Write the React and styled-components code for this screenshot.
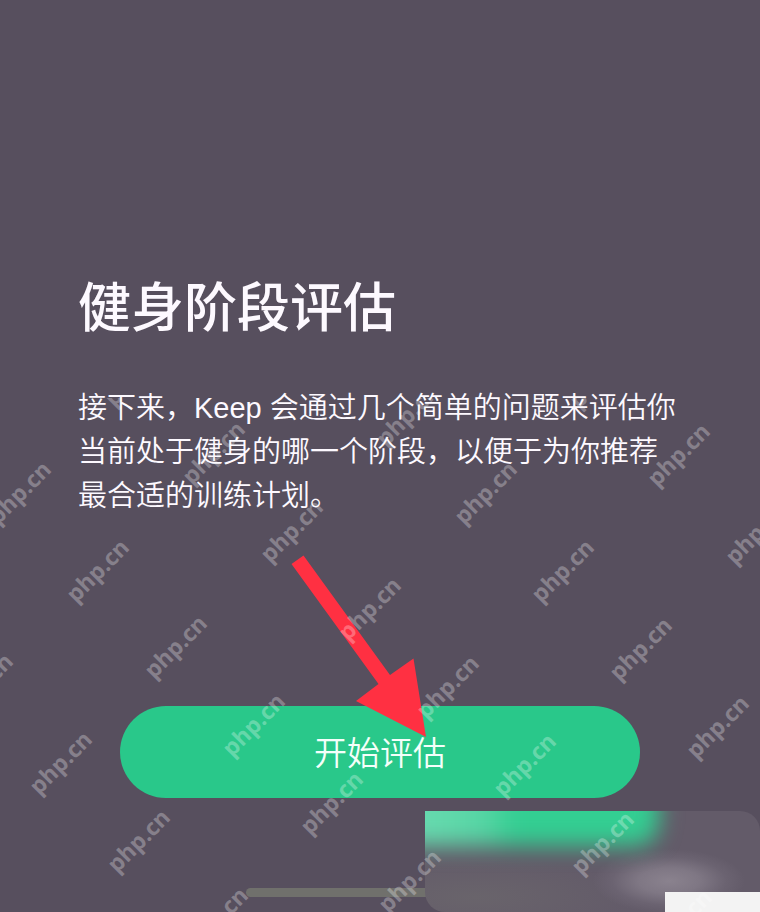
import styled, { createGlobalStyle } from "styled-components";

const GlobalStyle = createGlobalStyle`
  * {
    box-sizing: border-box;
  }

  body {
    margin: 0;
    background-color: #574f5e;
    font-family: "Liberation Sans", "Noto Sans CJK SC", sans-serif;
  }
`;

const Screen = styled.div`
  position: relative;
  min-height: 100vh;
  overflow: hidden;
  display: flex;
  flex-direction: column;
  justify-content: flex-end;
  background-color: #574f5e;
  color: #fdf9ff;
`;
const Content = styled.main`
  padding: 0 76px 0 78px;
`;
const Title = styled.h1`
  margin: 0 0 45px;
  font-size: 53px;
  font-weight: 500;
  line-height: 64px;
`;
const Description = styled.p`
  margin: 0;
  font-size: 29px;
  font-weight: 350;
  line-height: 44px;
`;
const Actions = styled.div`
  position: relative;
  display: flex;
  justify-content: center;
  margin-top: 188px;
  padding: 0 120px;
`;
const StartButton = styled.button`
  flex: 1;
  max-width: 520px;
  height: 92px;
  padding: 4px 0 0;
  border: none;
  border-radius: 46px;
  background-color: #29c88a;
  color: #f4fffa;
  font-family: inherit;
  font-size: 33px;
  font-weight: 350;
  line-height: 48px;
  cursor: pointer;
`;
const Arrow = styled.svg`
  position: absolute;
  left: calc(50% - 89px);
  bottom: 60px;
  width: 136px;
  height: 183px;
  pointer-events: none;
`;
const HomeBar = styled.div`
  align-self: center;
  width: 268px;
  height: 9px;
  margin: 90px 0 15px;
  border-radius: 5px;
  background-color: #70706c;
`;

const GlassPanel = styled.div`
  position: absolute;
  right: 0;
  bottom: 0;
  width: 335px;
  height: 101px;
  overflow: hidden;
  display: flex;
  flex-direction: column;
  justify-content: space-between;
  border-radius: 0 20px 0 20px;
  background:
    radial-gradient(
      ellipse 76px 32px at 244px 70px,
      #8a828e 0%,
      #7f7784 40%,
      #6b6371 75%,
      rgba(99, 91, 105, 0) 100%
    ),
    radial-gradient(
      ellipse 160px 40px at 50px 86px,
      #69646b 0%,
      rgba(99, 91, 105, 0) 100%
    ),
    #635b69;
`;
const Glow = styled.div`
  width: 274px;
  height: 75px;
  margin: -40px 0 0 -40px;
  border-radius: 24px;
  background: linear-gradient(
    to right,
    #6ddcb2 0,
    #64d9ad 50px,
    #56d5a4 100px,
    #33ce92 130px
  );
  filter: blur(11px);
`;
const Corner = styled.div`
  align-self: flex-end;
  width: 95px;
  height: 20px;
  background-color: #f3f3f3;
`;

const Watermarks = styled.div`
  position: absolute;
  inset: 398px 0 0;
  overflow: hidden;
  pointer-events: none;
`;
const Mark = styled.span`
  position: absolute;
  left: ${({ $x }) => $x}px;
  top: ${({ $y }) => $y}px;
  transform: translate(-50%, -50%) rotate(-45deg);
  color: rgba(255, 255, 255, 0.28);
  font-family: "Noto Sans", "Open Sans", sans-serif;
  font-size: 23px;
  font-weight: 700;
  line-height: 32px;
`;

// centre of each mark, measured from the top of the watermark layer
const marks = [
  [135, -24],
  [600, -22],
  [407, 16],
  [213, 54],
  [678, 56],
  [485, 94],
  [19, 94],
  [291, 132],
  [756, 134],
  [562, 172],
  [97, 172],
  [369, 210],
  [175, 248],
  [640, 250],
  [-19, 286],
  [447, 288],
  [253, 326],
  [717, 328],
  [60, 364],
  [524, 366],
  [331, 404],
  [138, 442],
  [602, 444],
  [409, 482],
  [216, 520],
  [680, 522],
];

const App = () => {
  return (
    <>
      <GlobalStyle />
      <Screen>
        <Content>
          <Title>健身阶段评估</Title>
          <Description>
            接下来，Keep 会通过几个简单的问题来评估你当前处于健身的哪一个阶段，以便于为你推荐最合适的训练计划。
          </Description>
        </Content>
        <Actions>
          <StartButton type="button">开始评估</StartButton>
          <Arrow viewBox="291 555 136 183" aria-hidden="true">
            <polygon
              points="291.5,564 303.5,555.5 390,675 413.5,658.5 426,737 356,701 378.5,684"
              fill="#ff3042"
            />
          </Arrow>
        </Actions>
        <HomeBar />
        <GlassPanel>
          <Glow />
          <Corner />
        </GlassPanel>
        <Watermarks aria-hidden="true">
          {marks.map(([x, y]) => (
            <Mark key={`${x}-${y}`} $x={x} $y={y}>
              php.cn
            </Mark>
          ))}
        </Watermarks>
      </Screen>
    </>
  );
};

export default App;
